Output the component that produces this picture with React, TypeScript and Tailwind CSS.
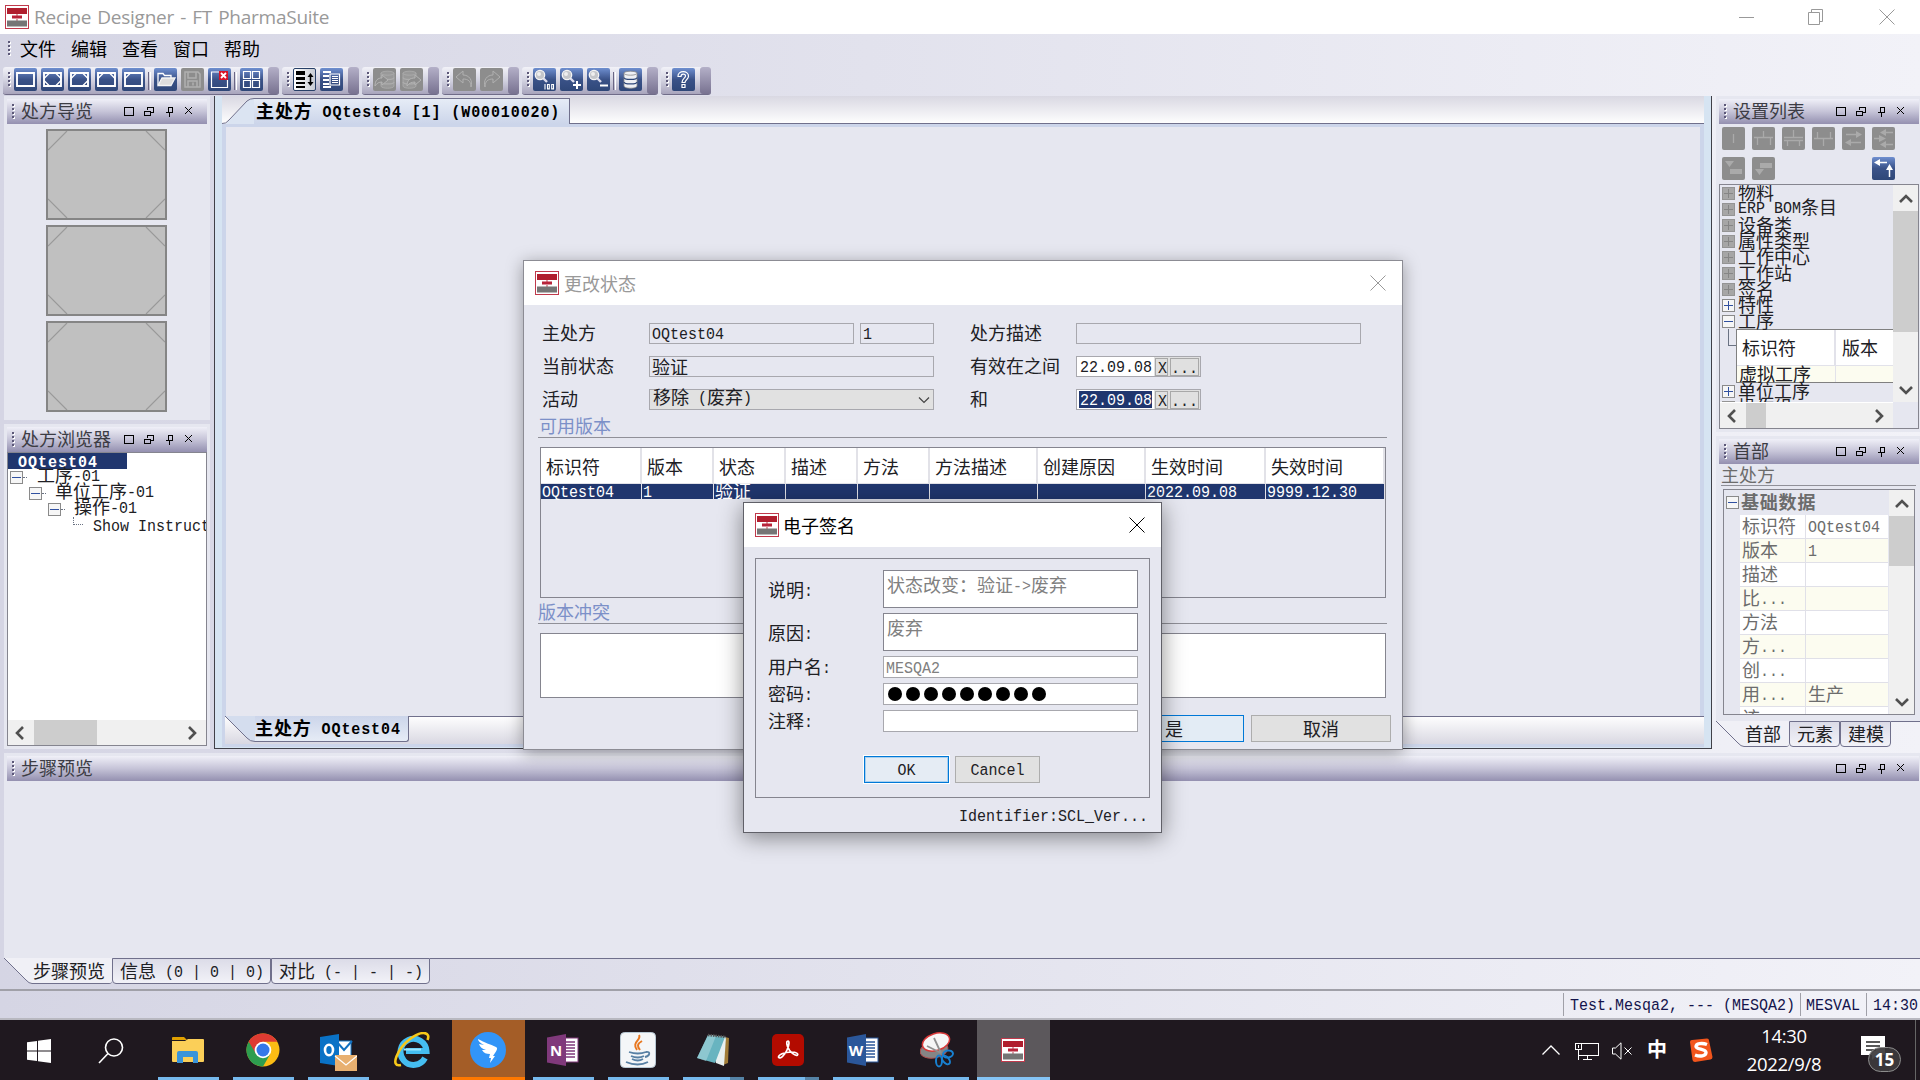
import React from "react";

/* Mixed-width text: half-width runs are 9px per character, full-width runs 18px. */
function T({ children, className = "", latin = "" }: { children: string; className?: string; latin?: string }) {
  const parts = children.split(/([\x20-\x7e]+)/).filter(Boolean);
  return (
    <span className={"whitespace-pre " + className}>
      {parts.map((p, i) =>
        /^[\x20-\x7e]/.test(p) ? (
          <span key={i} className={"inline-block -translate-y-[2px] scale-y-[1.14] font-['Liberation_Mono',monospace] text-[15px] " + latin}>{p}</span>
        ) : (
          <span key={i} className="inline-block -translate-y-px">{p}</span>
        )
      )}
    </span>
  );
}

function AppIcon({ className = "h-6 w-6" }: { className?: string }) {
  return (
    <svg viewBox="0 0 24 24" className={className + " shrink-0"}>
      <rect x="0.5" y="0.5" width="23" height="23" fill="#fff" stroke="#c03a4c" />
      <rect x="2" y="3" width="20" height="6" fill="#b01e2e" />
      <path d="M11.500 9h1v2h-1zM11.500 14h1v2h-1z" fill="#c04050" />
      <rect x="7" y="10.500" width="10" height="3" fill="#b8243a" />
      <rect x="2" y="15.5" width="20" height="6" fill="#757575" />
    </svg>
  );
}

function Grip({ className = "" }: { className?: string }) {
  return (
    <svg viewBox="0 0 3 18" className={"h-[18px] w-[3px] shrink-0 " + className} shapeRendering="crispEdges">
      {[0, 4, 8, 12].map((y) => (
        <g key={y}>
          <rect x="1" y={y + 2} width="2" height="2" fill="#fff" />
          <rect x="0" y={y + 1} width="2" height="2" fill="#5c5878" />
        </g>
      ))}
    </svg>
  );
}

function PanelHeader({ title }: { title: string }) {
  return (
    <div className="flex h-[25px] shrink-0 items-center bg-linear-to-b from-[#f0f0f8] via-[#c6c4d8] to-[#9490b0] pl-[5px] pr-[13px]">
      <Grip />
      <T className="ml-[6px] flex-1 leading-[25px] text-[#3c3c44]">{title}</T>
      <svg viewBox="0 0 70 12" className="h-3 w-[70px] shrink-0 -translate-y-px" fill="none" stroke="#000" shapeRendering="crispEdges">
        <rect x="0.5" y="2.5" width="9" height="8" />
        <path d="M20.500 6.500h6v4h-6zM23.500 5V2.500h6v5H27" />
        <path d="M44.500 2v5M48.500 2v5M44 2.500h5M42 7.500h7M45.500 8v4" />
        <path d="M61 2l7 7M68 2l-7 7" shapeRendering="auto" />
      </svg>
    </div>
  );
}

/* ---------- toolbar ---------- */

function ToolButton({ kind = "blue", children }: { kind?: "blue" | "gray" | "light"; children?: React.ReactNode }) {
  const tone =
    kind === "blue"
      ? "bg-linear-to-b from-[#6f8fd0] via-[#3a5288] to-[#2f4778]"
      : kind === "gray"
      ? "bg-[#8d8d8d]"
      : "border border-[#284068] bg-linear-to-r from-white to-[#c8ccd4]";
  return (
    <div className={"h-[23px] w-[23px] shrink-0 overflow-hidden rounded-[2px] " + tone}>
      <svg viewBox="0 0 23 23" className={kind === "light" ? "-m-px h-[23px] w-[23px]" : "h-[23px] w-[23px]"} fill="none" stroke={kind === "gray" ? "#aaa" : "#fff"} strokeWidth="1.3">
        {children}
      </svg>
    </div>
  );
}

function ToolGroup({ children }: { children: React.ReactNode }) {
  return (
    <div className="flex h-7 overflow-hidden rounded-[3px] border-b border-[#706c88] bg-linear-to-b from-[#f2f2f8] via-[#d2d2e0] to-[#a8a4bc]">
      <div className="flex items-start pt-px">
        <Grip className="mx-[5px] mt-[3px] mr-[3px]" />
        <div className="flex gap-1">{children}</div>
      </div>
      <div className="ml-[5px] w-[11px] rounded-l-[3px] bg-linear-to-b from-[#b4b0c8] to-[#787290]" />
    </div>
  );
}

function Sep() {
  return <div className="-mx-px mt-1 h-[18px] w-[3px] border-l border-[#6a6684] border-r border-r-white" />;
}

function Cylinder({ x = 5, y = 3, stroke = "#888", fill = "#eef0f4" }: { x?: number; y?: number; stroke?: string; fill?: string }) {
  return (
    <g transform={`translate(${x} ${y})`} stroke={stroke} strokeWidth="0.8" fill={fill}>
      <path d="M0 2v13c0 3 13 3 13 0V2z" />
      <ellipse cx="6.500" cy="2.200" rx="6.500" ry="2" />
      <path d="M0 6.500c0 2.600 13 2.600 13 0M0 11c0 2.600 13 2.600 13 0" stroke={stroke === "#888" ? "#2f4778" : stroke} strokeWidth="1.200" fill="none" />
    </g>
  );
}

function Magnifier() {
  return (
    <g>
      <path d="M10.500 10.500l3.500 3.500" stroke="#dde" strokeWidth="2.400" />
      <circle cx="7" cy="7" r="4.700" fill="#c4c6ca" stroke="#f4f4f4" strokeWidth="1.300" />
      <circle cx="6" cy="6" r="2" fill="#eee" stroke="none" />
    </g>
  );
}

function Frame() {
  return <path d="M3 5h17v13H3z" strokeWidth="1.900" />;
}

function Toolbar() {
  return (
    <div className="flex h-[29px] items-start gap-[3px]">
      <ToolGroup>
        <ToolButton><Frame /></ToolButton>
        <ToolButton><Frame /><path d="M3 10.500l5.500-5.500M14.500 5l5.500 5.500M3 12.500l5.500 5.500M14.500 18l5.500-5.500" /></ToolButton>
        <ToolButton><Frame /><path d="M3 10.500l5.500-5.500M14.500 5l5.500 5.500M14.500 18l5.500-5.500" /></ToolButton>
        <ToolButton><Frame /><path d="M3 10.500l5.500-5.500M14.500 5l5.500 5.500" /></ToolButton>
        <ToolButton><Frame /><path d="M3 10.500l5.500-5.500" /></ToolButton>
        <Sep />
        <ToolButton>
          <path d="M4 17V5.500h5l1.500 2H17V10" />
          <path d="M4 17.500l4-7.500h13l-4 7.500z" fill="#ddd" stroke="#f4f4f4" />
        </ToolButton>
        <ToolButton kind="gray">
          <path d="M4 4h13l2 2v13H4zM7 4v6h8V4M7 19v-6h9v6M12 14.500v3" stroke="#b0b0b0" strokeWidth="1.500" />
        </ToolButton>
        <ToolButton>
          <path d="M12 4H3.500v15.500h16V12" strokeWidth="1.200" />
          <rect x="11" y="3" width="9" height="9" fill="#d81428" stroke="none" />
          <path d="M13 5l5 5M18 5l-5 5" strokeWidth="1.800" />
        </ToolButton>
        <Sep />
        <ToolButton>
          <path d="M3.500 3.500h7v7h-7zM12.500 3.500h7v7h-7zM3.500 12.500h7v7h-7zM12.500 12.500h7v7h-7z" strokeWidth="1.200" />
        </ToolButton>
      </ToolGroup>
      <ToolGroup>
        <ToolButton kind="light">
          <path d="M3 3h9v4H3zM3 9h9v3H3zM3 14h9v2H3zM3 18h9v2H3z" fill="#000" stroke="none" />
          <path d="M17.500 8v7" stroke="#000" strokeWidth="1.500" />
          <path d="M14.500 9l3-4 3 4zM14.500 14l3 4 3-4z" fill="#000" stroke="none" />
        </ToolButton>
        <ToolButton>
          <path d="M3 4h8M3 8h6M3 12h6M3 16h6M3 19h8" strokeWidth="2" />
          <path d="M10 6h9.500v11H10z" strokeWidth="1.200" />
          <path d="M12 8.500h6M12 10.500h6M12 12.500h6M12 14.500h6" strokeWidth="1" />
        </ToolButton>
      </ToolGroup>
      <ToolGroup>
        <ToolButton kind="gray">
          <Cylinder x={8} y={3} stroke="#adadad" fill="#999" />
          <path d="M2 18c0-6 3-8 7-8V7l6 5-6 5v-3c-3 0-5 1-7 4z" fill="#8d8d8d" stroke="#b4b4b4" strokeWidth="1" />
        </ToolButton>
        <ToolButton kind="gray">
          <Cylinder x={3} y={3} stroke="#adadad" fill="#999" />
          <path d="M7 18c0-6 3-8 8-8V7l6 5-6 5v-3c-3 0-6 1-8 4z" fill="#8d8d8d" stroke="#b4b4b4" strokeWidth="1" />
        </ToolButton>
      </ToolGroup>
      <ToolGroup>
        <ToolButton kind="gray"><path d="M18 19c0-6-3-8-8-8v4L3 9l7-6v4c6 0 10 5 8 12z" stroke="#b0b0b0" strokeWidth="1" /></ToolButton>
        <ToolButton kind="gray"><path d="M5 19c0-6 3-8 8-8v4l7-6-7-6v4C7 7 3 12 5 19z" stroke="#b0b0b0" strokeWidth="1" /></ToolButton>
      </ToolGroup>
      <ToolGroup>
        <ToolButton>
          <Magnifier />
          <path d="M12 16v5.500M14.500 16.500h1.800v4.400h-1.800zM18.700 16.500h1.800v4.400h-1.800z" strokeWidth="1.100" />
        </ToolButton>
        <ToolButton><Magnifier /><path d="M17 13v8M13 17h8" strokeWidth="2" /></ToolButton>
        <ToolButton><Magnifier /><path d="M13 17.500h8" strokeWidth="2" /></ToolButton>
        <Sep />
        <ToolButton><Cylinder /></ToolButton>
      </ToolGroup>
      <ToolGroup>
        <ToolButton>
          <path d="M6 8.500C5.500 2 17 2 16.500 8.500c-.3 3-3.500 3.500-3.500 6h-3c0-4 3.500-4.500 3.500-6.500 0-2.500-4.500-2.500-4.500 .500zM10 16.500h3v3h-3z" strokeWidth="1.200" />
        </ToolButton>
      </ToolGroup>
    </div>
  );
}

/* ---------- scroll bars ---------- */

const chevrons = {
  left: "M15 6l-6 6 6 6",
  right: "M9 6l6 6-6 6",
  up: "M6 15l6-6 6 6",
  down: "M6 9l6 6 6-6",
};
function Arrow({ dir }: { dir: keyof typeof chevrons }) {
  return (
    <svg viewBox="0 0 24 24" className="h-6 w-6 shrink-0" fill="none" stroke="#505050" strokeWidth="2.6">
      <path d={chevrons[dir]} />
    </svg>
  );
}

function Expander({ open = false, off = false }: { open?: boolean; off?: boolean }) {
  return (
    <svg viewBox="0 0 13 13" className="h-[13px] w-[13px] shrink-0" shapeRendering="crispEdges" fill="none">
      <rect x="0.5" y="0.5" width="12" height="12" fill={off ? "#a6a6a6" : "#f6f6f6"} stroke={off ? "#949494" : "#8a8a8a"} />
      <path d={open ? "M2 6.500h9" : "M2 6.500h9M6.500 2v9"} stroke={off ? "#868686" : "#3050a0"} />
    </svg>
  );
}

/* ---------- left column ---------- */

function Thumb() {
  return (
    <div className="h-[91px] w-[121px] border-2 border-[#858585] bg-[#c0c0c0]">
      <svg viewBox="0 0 117 87" className="h-full w-full" stroke="#999" strokeWidth="1.2">
        <path d="M0 19L19 0M98 0l19 19M0 68l19 19M98 87l19-19" />
      </svg>
    </div>
  );
}

function LeftColumn() {
  return (
    <div className="ml-1 flex w-[206px] shrink-0 flex-col gap-1">
      <div className="flex h-[324px] flex-col bg-[#e6e7f0] px-[3px] pt-[3px]">
        <PanelHeader title="处方导览" />
        <div className="mt-[5px] ml-[39px] flex flex-col gap-[5px]">
          <Thumb />
          <Thumb />
          <Thumb />
        </div>
      </div>
      <div className="flex h-[325px] flex-col bg-[#e6e7f0] px-[3px] pt-[3px] pb-[3px]">
        <PanelHeader title="处方浏览器" />
        <div className="flex flex-1 flex-col overflow-hidden border border-[#85858f] bg-white">
          <div className="flex h-4 w-[119px] shrink-0 items-center bg-[#20366e] pl-[10px] font-bold leading-4 tracking-[1px] text-white">
            <T latin="translate-y-0">OQtest04</T>
          </div>
          <div className="flex h-4 items-center pl-[2px]"><Expander open /><i className="w-[4px] border-t border-dotted border-gray-500" /><T className="ml-[10px] leading-4">工序-01</T></div>
          <div className="flex h-4 items-center pl-[21px]"><Expander open /><i className="w-[4px] border-t border-dotted border-gray-500" /><T className="ml-[9px] leading-4">单位工序-01</T></div>
          <div className="flex h-4 items-center pl-[40px]"><Expander open /><i className="w-[4px] border-t border-dotted border-gray-500" /><T className="ml-[9px] leading-4">操作-01</T></div>
          <div className="flex h-4 items-start pl-[65px]"><i className="h-[8px] w-[10px] shrink-0 border-b border-l border-dotted border-gray-500" /><T className="ml-[10px] leading-4">Show Instruct</T></div>
          <div className="mt-auto flex h-[25px] items-center bg-[#f0f0f0]">
            <Arrow dir="left" />
            <div className="ml-[2px] h-full w-[63px] bg-[#cdcdcd]" />
            <div className="ml-auto pr-[2px]"><Arrow dir="right" /></div>
          </div>
        </div>
      </div>
    </div>
  );
}

/* ---------- centre ---------- */

function Centre() {
  return (
    <div className="ml-1 flex h-[653px] w-[1498px] shrink-0 border border-t-0 border-[#404048] bg-[#d6e4f2] px-[7px] pb-px">
      <div className="flex flex-1 flex-col bg-[#ccd5ea] pb-[3px]">
        <div className="flex h-7 flex-none bg-linear-to-b from-[#d9d8e2] to-white">
          <svg viewBox="0 0 32 28" className="h-7 w-8 shrink-0">
            <path d="M0 27.500H4L25 5Q28 2.500 32 2.500V28H0z" fill="#dbe4f2" />
            <path d="M0 27.500Q4 28 7 24L25 5Q28 2.500 32 2.500" fill="none" stroke="#70708c" />
          </svg>
          <div className="mt-[2px] h-[26px] w-[316px] shrink-0 border-t border-r border-[#70708c] bg-linear-to-b from-[#e6ecf6] to-[#ccd5ea] pl-[2px] font-bold leading-6 tracking-[0.9px] text-black">
            <T>主处方 OQtest04 [1] (W00010020)</T>
          </div>
          <div className="flex-1 border-b border-[#70708c]" />
        </div>
        <div className="mx-1 mt-[3px] flex-1 bg-[#e6e7f0]" />
        <div className="ml-[3px] flex h-[28px] shrink-0 bg-linear-to-b from-white to-[#d9d8e2]">
          <svg viewBox="0 0 30 26" className="h-[26px] w-[30px] shrink-0">
            <path d="M0 0L22 22Q25 25.500 30 25.500V0z" fill="#d4ddee" />
            <path d="M0 0L22 22Q25 25.500 30 25.500" fill="none" stroke="#70708c" />
          </svg>
          <div className="h-[26px] w-[154px] shrink-0 rounded-br-[3px] border-r border-b border-[#70708c] bg-linear-to-b from-[#ccd5ea] to-[#e6ecf6] font-bold leading-[25px] tracking-[0.9px] text-black">
            <T>主处方 OQtest04</T>
          </div>
          <div className="flex-1 border-t border-[#70708c]" />
        </div>
      </div>
    </div>
  );
}

/* ---------- right column ---------- */

function SettingsPanel() {
  const names = ["物料", "ERP BOM条目", "设备类", "属性类型", "工作中心", "工作站", "签名"];
  return (
    <div className="flex h-[336px] flex-col bg-[#e6e7f0] pt-[3px] pr-px pl-[3px]">
      <PanelHeader title="设置列表" />
      <div className="mt-[3px] grid grid-cols-[repeat(6,23px)] gap-[7px] pl-[3px]">
        <ToolButton kind="gray"><path d="M11.500 7v9" /></ToolButton>
        <ToolButton kind="gray"><path d="M11.500 4v6M2 10.500h19M5.500 10v8M18.500 10v8" /></ToolButton>
        <ToolButton kind="gray"><path d="M11.500 3v7M2 10.500h19M2 13.500h19M5.500 14v5M17.500 14v5" /></ToolButton>
        <ToolButton kind="gray"><path d="M5.500 5v6M18.500 5v6M2 11.500h19M11.500 12v7" /></ToolButton>
        <ToolButton kind="gray"><path d="M4 7.500h12M7 15.500h12" /><path d="M14 4l6 3.500-6 3.500zM9 12l-6 3.500L9 19z" fill="#aaa" stroke="none" /></ToolButton>
        <ToolButton kind="gray"><path d="M13 5.500h8M2 11.500h6M13 17.500h8" /><path d="M14 2L8 5.500 14 9zM7 8l7 3.500L7 15zM14 14l-6 3.500 6 3.500z" fill="#aaa" stroke="none" /></ToolButton>
        <ToolButton kind="gray"><path d="M3 4h9l-4.500 6zM8 12h12v5H8z" fill="#aaa" stroke="none" /></ToolButton>
        <ToolButton kind="gray"><path d="M8 6h12v5H8zM3 12h9l-4.500 6z" fill="#aaa" stroke="none" /></ToolButton>
        <i /><i /><i />
        <ToolButton><path d="M7 5.500h8M17.500 12v8" strokeWidth="1.500" /><path d="M8 2L2 5.500 8 9zM14 13l3.500-6 3.500 6z" fill="#fff" stroke="none" /></ToolButton>
      </div>
      <div className="mt-1 flex h-[245px] flex-col border border-[#85858f]">
        <div className="flex h-[217px]">
          <div className="flex h-[217px] w-[173px] flex-col overflow-hidden leading-4">
            {names.map((n) => (
              <div key={n} className="flex h-4 shrink-0 items-center pl-[2px]"><Expander off /><T className="ml-[3px]">{n}</T></div>
            ))}
            <div className="flex h-4 shrink-0 items-center pl-[2px]"><Expander /><T className="ml-[3px]">特性</T></div>
            <div className="flex h-4 shrink-0 items-center pl-[2px]"><Expander open /><T className="ml-[3px]">工序</T></div>
            <div className="flex h-[54px] shrink-0">
              <div className="ml-2 h-[17px] w-2 shrink-0 border-b border-l border-gray-500" />
              <div className="flex-1 border border-r-0 border-[#808080] bg-white">
                <div className="flex h-9 border-b border-[#e2e2ea] leading-[37px]">
                  <T className="w-[99px] border-r-2 border-[#e2e2ea] pl-[5px]">标识符</T>
                  <T className="pl-[6px]">版本</T>
                </div>
                <div className="flex h-4 bg-[#fcfcf0] leading-4">
                  <T className="w-[99px] border-r border-[#e2e2ea] pl-[2px]">虚拟工序</T>
                </div>
              </div>
            </div>
            <div className="flex h-4 shrink-0 items-center pl-[2px]"><Expander /><T className="ml-[3px]">单位工序</T></div>
            <div className="flex h-4 shrink-0 items-center pl-[2px]"><Expander off /><T className="ml-[3px]">操作组</T></div>
          </div>
          <div className="flex flex-1 flex-col items-center bg-[#f0f0f0]">
            <div className="h-[26px] pt-[2px]"><Arrow dir="up" /></div>
            <div className="mr-px h-[121px] w-full bg-[#cdcdcd]" />
            <div className="mt-auto"><Arrow dir="down" /></div>
          </div>
        </div>
        <div className="flex h-[26px] w-[173px] items-center border-t border-white bg-[#f0f0f0]">
          <Arrow dir="left" />
          <div className="ml-[2px] h-full w-5 bg-[#cdcdcd]" />
          <div className="ml-auto pr-[2px]"><Arrow dir="right" /></div>
        </div>
      </div>
    </div>
  );
}

function HeaderPanel() {
  const rows: [string, string][] = [
    ["标识符", "OQtest04"],
    ["版本", "1"],
    ["描述", ""],
    ["比...", ""],
    ["方法", ""],
    ["方...", ""],
    ["创...", ""],
    ["用...", "生产"],
    ["该...", ""],
  ];
  return (
    <div className="flex h-[285px] flex-col bg-[#e6e7f0] pt-[3px] pr-px pl-[3px] text-[#6c6c6c]">
      <PanelHeader title="首部" />
      <div className="mr-[3px] ml-[2px] h-[22px] border-b border-[#909098] leading-[22px]"><T>主处方</T></div>
      <div className="mt-[3px] mr-1 ml-1 flex h-[226px] overflow-hidden border border-[#85858f]">
        <div className="w-[165px] shrink-0 overflow-hidden">
          <div className="flex h-[25px] items-center pl-[2px] font-bold"><Expander open /><T className="ml-[2px] leading-[25px] tracking-[0.8px]">基础数据</T></div>
          {rows.map(([a, b], i) => (
            <div key={i} className={"ml-4 flex h-6 w-[148px] border-b border-[#e0e0e8] leading-[22px] " + (i % 2 ? "bg-[#fcfcf0]" : "bg-white")}>
              <T className="w-[66px] shrink-0 border-r border-[#e0e0e8] pl-[2px]">{a}</T>
              <T className="pl-[2px]">{b}</T>
            </div>
          ))}
        </div>
        <div className="flex flex-1 flex-col items-center bg-[#f0f0f0]">
          <div className="h-[26px] pt-[2px]"><Arrow dir="up" /></div>
          <div className="h-[50px] w-full bg-[#cdcdcd]" />
          <div className="mt-auto"><Arrow dir="down" /></div>
        </div>
      </div>
    </div>
  );
}

function TabStrip({ first, firstW, rest }: { first: string; firstW: string; rest: [string, string][] }) {
  return (
    <div className="flex h-[26px] shrink-0">
      <svg viewBox="0 0 28 26" className="h-[26px] w-7 shrink-0">
        <path d="M0 0L22 22Q25 25.500 28 25.500V0z" fill="#f0f0f6" />
        <path d="M0 0L22 22Q25 25.500 28 25.500" fill="none" stroke="#70708c" />
      </svg>
      <div className={"shrink-0 rounded-br-[3px] border-b border-[#70708c] bg-[#f0f0f6] pl-px leading-[26px] " + firstW}><T>{first}</T></div>
      {rest.map(([label, w]) => (
        <div key={label} className={"shrink-0 rounded-b-[4px] border border-[#70708c] bg-linear-to-b from-[#dcdce8] to-[#f2f2f8] pl-[7px] leading-6 " + w}><T>{label}</T></div>
      ))}
      <div className="flex-1 border-t border-[#70708c]" />
    </div>
  );
}

function RightColumn() {
  return (
    <div className="ml-1 flex flex-1 flex-col overflow-hidden">
      <SettingsPanel />
      <div className="h-1 shrink-0" />
      <HeaderPanel />
      <TabStrip first="首部" firstW="w-[45px]" rest={[["元素", "w-[51px]"], ["建模", "w-[51px]"]]} />
    </div>
  );
}

/* ---------- change status dialog ---------- */

const box = "border border-[#a8a8ae]";

function DateField({ selected = false }: { selected?: boolean }) {
  return (
    <div className={"flex h-[21px] w-[125px] items-center bg-[#e0e0e0] leading-[17px] " + box}>
      <div className="h-full w-[77px] bg-white p-px pl-[2px]">
        <T className={"block h-[17px] w-[73px] pl-px " + (selected ? "bg-[#20366e] text-white" : "")}>22.09.08</T>
      </div>
      <div className="ml-px h-[18px] w-[13px] border border-[#a8a8a8] pl-[2px]"><T>X</T></div>
      <div className="ml-[2px] h-[18px] w-[29px] border border-[#a8a8a8]"><T>...</T></div>
    </div>
  );
}

function StatusDialog() {
  const cols: [string, string, string][] = [
    ["标识符", "OQtest04", "w-[101px]"],
    ["版本", "1", "w-[72px]"],
    ["状态", "验证", "w-[72px]"],
    ["描述", "", "w-[72px]"],
    ["方法", "", "w-[72px]"],
    ["方法描述", "", "w-[108px]"],
    ["创建原因", "", "w-[108px]"],
    ["生效时间", "2022.09.08", "w-[120px]"],
    ["失效时间", "9999.12.30", "w-[119px]"],
  ];
  return (
    <div className="absolute top-[260px] left-[523px] flex h-[490px] w-[880px] flex-col border border-[#8c8c94] bg-[#e6e7f0] shadow-[0_3px_16px_rgba(0,0,0,0.35)]">
      <div className="flex h-11 shrink-0 items-center bg-white pb-px pl-[11px] text-[#999]">
        <AppIcon />
        <span className="ml-[5px] flex-1">更改状态</span>
        <svg viewBox="0 0 16 16" className="mr-4 h-4 w-4" stroke="#999"><path d="M.5.500l15 15M15.500.500l-15 15" /></svg>
      </div>
      <div className="mt-[18px] ml-[18px] grid grid-cols-[107px_321px_106px_285px] grid-rows-[21px_21px_21px] gap-y-3 leading-[21px]">
        <T>主处方</T>
        <div className="flex gap-[6px]">
          <div className={"h-[21px] w-[205px] pl-[2px] leading-[19px] " + box}><T>OQtest04</T></div>
          <div className={"h-[21px] w-[74px] pl-[2px] leading-[19px] " + box}><T>1</T></div>
        </div>
        <T>处方描述</T>
        <div className={"h-[21px] " + box} />
        <T>当前状态</T>
        <div className={"h-[21px] w-[285px] pl-[2px] leading-5 " + box}><T>验证</T></div>
        <T>有效在之间</T>
        <DateField />
        <T>活动</T>
        <div className={"flex h-[21px] w-[285px] items-center justify-between bg-[#e1e1e1] pr-[3px] pl-[3px] leading-5 " + box}>
          <T>移除 (废弃)</T>
          <svg viewBox="0 0 12 8" className="h-2 w-3" fill="none" stroke="#444" strokeWidth="1.2"><path d="M1 1.500l5 5 5-5" /></svg>
        </div>
        <T>和</T>
        <DateField selected />
      </div>
      <div className="mt-[5px] mr-[15px] ml-[14px] h-[23px] border-b border-[#909098] pl-px leading-[22px] text-[#7c90c8]"><T>可用版本</T></div>
      <div className="mt-[9px] ml-4 h-[151px] w-[846px] border border-[#85858f]">
        <div className="flex h-[36px] bg-white leading-[38px]">
          {cols.map(([h, , w]) => (
            <div key={h} className={"h-9 shrink-0 border-r-2 border-b border-[#e2e2e8] pl-[5px] " + w}><T>{h}</T></div>
          ))}
        </div>
        <div className="flex h-[15px] w-[844px] bg-[#20366e] leading-[15px] text-white">
          {cols.map(([h, v, w]) => (
            <div key={h} className={"h-[15px] shrink-0 border-r border-[#e2e2e8] pl-px " + w}><T>{v}</T></div>
          ))}
        </div>
      </div>
      <div className="mt-[3px] mr-[15px] ml-[14px] h-[23px] border-b border-[#909098] leading-[22px] text-[#7c90c8]"><T>版本冲突</T></div>
      <div className="mt-[9px] ml-4 h-[65px] w-[846px] border border-[#85858f] bg-white" />
      <div className="mt-[17px] mr-[11px] flex justify-end gap-[7px] text-center leading-[26px]">
        <div className="h-[27px] w-[140px] border border-[#0078d7] bg-[#e3ecf5]"><T>是</T></div>
        <div className="h-[27px] w-[140px] border border-[#adadad] bg-[#e1e1e1]"><T>取消</T></div>
      </div>
    </div>
  );
}

/* ---------- signature dialog ---------- */

function SignatureDialog() {
  return (
    <div className="absolute top-[502px] left-[743px] flex h-[331px] w-[419px] flex-col border border-[#606068] bg-[#e6e7f0] shadow-[0_4px_22px_rgba(0,0,0,0.45)]">
      <div className="flex h-11 shrink-0 items-center bg-white pb-px pl-[11px] text-black">
        <AppIcon />
        <span className="ml-1 flex-1">电子签名</span>
        <svg viewBox="0 0 16 16" className="mr-4 h-4 w-4" stroke="#000"><path d="M.5.500l15 15M15.500.500l-15 15" /></svg>
      </div>
      <div className="mt-[11px] ml-[11px] h-[242px] w-[395px] border border-[#85858f] pt-[11px] pl-[12px]">
        <div className="grid grid-cols-[115px_255px] grid-rows-[38px_38px_22px_22px_22px] gap-y-[5px] leading-[22px]">
          <T className="leading-[40px]">说明:</T>
          <div className="border border-[#85858f] bg-white pl-[3px] leading-[28px] text-[#808080]"><T>状态改变：验证-&gt;废弃</T></div>
          <T className="leading-[40px]">原因:</T>
          <div className="border border-[#85858f] bg-white pl-[3px] leading-[28px] text-[#808080]"><T>废弃</T></div>
          <T>用户名:</T>
          <div className="border border-[#a8a8ae] bg-white pl-[2px] leading-[21px] text-[#808080]"><T>MESQA2</T></div>
          <T>密码:</T>
          <div className="flex items-center gap-1 border border-[#a8a8ae] bg-white pl-1">
            {Array.from({ length: 9 }, (_, i) => <i key={i} className="h-[14px] w-[14px] rounded-full bg-black" />)}
          </div>
          <T>注释:</T>
          <div className="border border-[#a8a8ae] bg-white" />
        </div>
        <div className="mt-6 ml-24 flex gap-[6px] text-center leading-[25px]">
          <div className="h-[27px] w-[85px] border border-[#0078d7] bg-[#e5ecf4] shadow-[inset_0_0_0_1px_#a8d0f0,0_0_0_1px_#fff]"><T>OK</T></div>
          <div className="h-[27px] w-[85px] border border-[#adadad] bg-[#e1e1e1]"><T>Cancel</T></div>
        </div>
      </div>
      <div className="mt-[5px] pr-[13px] text-right leading-6"><T>Identifier:SCL_Ver...</T></div>
    </div>
  );
}

/* ---------- task bar ---------- */

function Slot({ children, line = "run", className = "" }: { children: React.ReactNode; line?: "run" | "two" | "none" | "full"; className?: string }) {
  return (
    <div className={"flex h-[60px] w-[73px] shrink-0 flex-col items-center " + className}>
      <div className="flex h-[57px] items-center pt-[3px] pr-px">{children}</div>
      {line === "run" && <div className="h-[3px] w-[61px] bg-[#76b9ed]" />}
      {line === "full" && <div className="h-[3px] w-full bg-[#85c4f5]" />}
      {line === "two" && <div className="flex h-[3px] w-[61px]"><i className="flex-1 bg-[#76b9ed]" /><i className="w-[14px] bg-[#5583a6]" /></div>}
    </div>
  );
}

function OfficeIcon({ letter, color }: { letter: string; color: string }) {
  return (
    <svg viewBox="0 0 32 32" className="h-8 w-8">
      <rect x="17" y="4" width="14" height="24" fill="#fff" stroke={color} />
      <path d="M19 8h9M19 11h9M19 14h9M19 17h9M19 20h9M19 23h9" stroke={color} strokeWidth="1.400" />
      <path d="M0 3.500L19 0v32L0 28.500z" fill={color} />
      <text x="9" y="22" textAnchor="middle" fill="#fff" fontFamily="Open Sans, sans-serif" fontWeight="700" fontSize="15">{letter}</text>
    </svg>
  );
}

function Taskbar() {
  return (
    <div className="flex h-[60px] shrink-0 bg-[#1f181f] text-white">
      <div className="flex w-[77px] items-center justify-center pt-[2px]">
        <svg viewBox="0 0 24 24" className="h-6 w-6" fill="#fff"><path d="M0 3.300L10 2v9.500H0zM11 1.800L24 0v11.500H11zM0 12.500h10V22L0 20.700zM11 12.500h13V24l-13-1.800z" /></svg>
      </div>
      <div className="flex w-[67px] items-center justify-center pt-[2px]">
        <svg viewBox="0 0 26 26" className="h-[26px] w-[26px]" fill="none" stroke="#fff" strokeWidth="1.600"><circle cx="16" cy="9.500" r="8.500" /><path d="M10 15.500L1 25" /></svg>
      </div>
      <div className="ml-2 flex gap-[2px]">
        <Slot>
          <svg viewBox="0 0 32 28" className="h-7 w-8">
            <path d="M0 2q0-1 1-1h11l3 3H0z" fill="#e0a000" />
            <path d="M0 5h13l3-2h15q1 0 1 1v21q0 1-1 1H1q-1 0-1-1z" fill="#fbcf58" />
            <path d="M5 27V17q0-2 2-2h17q2 0 2 2v10h-5v-6H11v6z" fill="#3a94da" />
          </svg>
        </Slot>
        <Slot>
          <svg viewBox="0 0 34 34" className="h-[34px] w-[34px]">
            <circle cx="17" cy="17" r="16.500" fill="#fbbc14" />
            <path d="M2.700 8.700A16.500 16.500 0 0 0 17 33.500l7-12L17 17z" fill="#2d9d4f" />
            <path d="M2.700 8.700A16.500 16.500 0 0 1 31.300 8.700H17l-7 12z" fill="#dd3b32" />
            <circle cx="17" cy="17" r="8.300" fill="#fff" />
            <circle cx="17" cy="17" r="6.500" fill="#3478e8" />
          </svg>
        </Slot>
        <Slot>
          <svg viewBox="0 0 38 38" className="mt-1 h-[38px] w-[38px]">
            <rect x="17" y="8" width="15" height="16" fill="#fff" stroke="#1b7ccc" />
            <path d="M17 8l8 9 8-9" fill="none" stroke="#1070c0" strokeWidth="2" />
            <path d="M1 4l19-3v32L1 30z" fill="#0a72c6" />
            <ellipse cx="10" cy="17" rx="4" ry="5.200" fill="none" stroke="#fff" strokeWidth="2.600" />
            <rect x="16" y="22" width="22" height="16" fill="#e8b070" />
            <path d="M16 23l11 9 11-9" fill="none" stroke="#fff" strokeWidth="1.200" />
          </svg>
        </Slot>
        <Slot line="none">
          <svg viewBox="0 0 36 36" className="mr-[3px] h-9 w-9" fill="none">
            <path d="M31 26A13 13 0 1 1 32.500 19H12" stroke="#45bdf0" strokeWidth="6" />
            <path d="M10 17.500h17" stroke="#9be6ff" strokeWidth="2" />
            <path d="M7 33C-5 36 4 16 16 7S37 0 33.500 8" stroke="#f8c818" strokeWidth="2.600" />
          </svg>
        </Slot>
        <div className="flex h-[60px] w-[73px] flex-col items-center bg-[#a45d27]">
          <div className="flex h-[57px] items-center pt-[3px] pr-px">
            <svg viewBox="0 0 36 36" className="h-9 w-9">
              <circle cx="18" cy="18" r="18" fill="#3295f8" />
              <path d="M8 7c7 4 12 5 18 8 2 1 1 3-1 6l-2 3h2l-5 7 1-5h-2l1-4c-4 0-6-1-8-4l4 0c-4-1-6-3-7-6l5 1C10 11 8 9 8 7z" fill="#fff" />
            </svg>
          </div>
          <div className="h-[3px] w-full bg-[#ff7800]" />
        </div>
        <Slot><OfficeIcon letter="N" color="#80397b" /></Slot>
        <Slot>
          <svg viewBox="0 0 36 36" className="h-9 w-9" fill="none">
            <rect x=".5" y=".5" width="35" height="35" rx="4" fill="#f4f6f8" stroke="#b8c8d4" />
            <path d="M19 3c3 5-8 7-2 15M22 9c-5 3-5 5-2 9" stroke="#e87820" strokeWidth="2" />
            <path d="M9 20q9 3 17 0M11 24q7 3 13 0M12 27q6 3 11 0M6 30q12 5 22 0M26 20c5-1 4 4-1 5" stroke="#5880a4" strokeWidth="1.800" />
          </svg>
        </Slot>
        <Slot line="two">
          <svg viewBox="0 0 34 34" className="h-[34px] w-[34px]">
            <path d="M29 4l4 1-1 25-5 2z" fill="#a07c38" />
            <path d="M13 2l17 2-2 29-8-3z" fill="#e8f0f0" />
            <path d="M12 2l17 2-10 26L1 25z" fill="#68b4c0" />
            <path d="M12 2l8 1-10 25-9-3z" fill="#a6d4da" opacity=".6" />
            <path d="M12 2l18 2" stroke="#555" strokeWidth="2.500" strokeDasharray="1.500 1" />
          </svg>
        </Slot>
        <Slot line="two">
          <svg viewBox="0 0 34 34" className="h-[34px] w-[34px]" fill="none">
            <rect x="1" y="1" width="32" height="32" rx="5" fill="#b30b00" />
            <path d="M7.500 24c0-2 5-5 13-5 5 0 7 2 6 3-2 1.500-8-3-10-8.500C15 9 16 8 17 8c1.500 0 1.300 4-1 9-2.500 5.500-7 10-8.500 7z" stroke="#fff" strokeWidth="1.700" />
          </svg>
        </Slot>
        <Slot><OfficeIcon letter="W" color="#2b579a" /></Slot>
        <Slot>
          <svg viewBox="0 0 34 36" className="mr-[2px] h-9 w-[34px]" fill="none">
            <ellipse cx="14" cy="18" rx="14" ry="8" fill="#858585" stroke="#b05050" transform="rotate(-10 14 18)" />
            <ellipse cx="16" cy="10" rx="14" ry="8.500" fill="#f6f6f6" stroke="#d83838" strokeWidth="1.500" transform="rotate(-18 16 10)" />
            <path d="M14 6l7 15M7 14l14 7" stroke="#909090" strokeWidth="1.800" />
            <ellipse cx="28" cy="22" rx="5" ry="3.500" stroke="#1880d0" strokeWidth="2" transform="rotate(-10 28 22)" />
            <ellipse cx="19" cy="29" rx="3" ry="5.500" stroke="#1880d0" strokeWidth="2" />
            <ellipse cx="26" cy="28" rx="3" ry="5" stroke="#1880d0" strokeWidth="2" transform="rotate(-40 26 28)" />
          </svg>
        </Slot>
        <Slot line="full" className="bg-[#5c585c]"><AppIcon /></Slot>
      </div>
      <div className="ml-auto flex items-center">
        <svg viewBox="0 0 18 10" className="h-[10px] w-[18px]" fill="none" stroke="#fff" strokeWidth="1.300"><path d="M.5 9.500L9 1l8.500 8.500" /></svg>
        <svg viewBox="0 0 24 18" className="mt-[2px] ml-[15px] h-[18px] w-6" fill="none" stroke="#fff" shapeRendering="crispEdges"><path d="M6 1.500h17.500v12H3.500V8M.5 1.500h6v6h-6zM3.500 3v3M3.500 13v5M12.500 14v3M8 17.500h9" /></svg>
        <svg viewBox="0 0 20 18" className="mt-[2px] ml-[13px] h-[18px] w-5" fill="none" stroke="#fff"><path d="M.5 6h3L9 .800v16.400L3.500 12h-3zM12.500 5.500l7 7M19.500 5.500l-7 7" /></svg>
        <span className="mb-[3px] ml-[15px] w-5 text-center text-[20px] font-bold leading-none">中</span>
        <svg viewBox="0 0 24 24" className="ml-[22px] h-6 w-6" fill="none">
          <path d="M1 4Q1 2 3 2L18 .500q2 0 2 2L23.500 19q0 2-2 2.500L6 24q-2 0-2.500-2z" fill="#f2551c" />
          <path d="M18 6.500c-5-2-11-1-11 2s10 2.500 10 6-6 4.500-11 2.500" stroke="#fff" strokeWidth="3.400" />
        </svg>
        <div className="ml-[24px] w-[94px] text-center font-['Open_Sans',sans-serif] text-[18.5px] leading-7 tracking-[-0.3px]">
          <div>14:30</div>
          <div>2022/9/8</div>
        </div>
        <div className="relative mt-2 ml-[30px] h-[36px] w-10">
          <svg viewBox="0 0 24 24" className="h-6 w-6"><path d="M0 0h24v19h-8l-5 5v-5H0z" fill="#fff" /><path d="M5 6h14M5 10h14M5 14h10" stroke="#222" strokeWidth="1.400" /></svg>
          <div className="absolute top-[11px] left-[7px] flex h-[25px] w-[33px] items-center justify-center rounded-full border border-[#8c8c8c] bg-[#3c3a3cee] font-['Open_Sans',sans-serif] text-[17px] font-bold leading-none">15</div>
        </div>
        <div className="ml-[14px] h-full w-[5px] border-l border-[#666]" />
      </div>
    </div>
  );
}

/* ---------- page ---------- */

export default function App() {
  return (
    <div className="relative flex h-[1080px] w-[1920px] flex-col overflow-hidden bg-linear-to-r from-[#d5d5e4] to-[#f2f2f8] font-['Noto_Sans_CJK_SC',sans-serif] text-[18px] leading-6 text-[#202024]">
      <div className="flex h-[34px] shrink-0 items-center bg-white pb-px pl-[5px] text-[#999]">
        <AppIcon />
        <span className="ml-[5px] flex-1 font-['Open_Sans',sans-serif] text-[19px] tracking-[-0.25px] [word-spacing:1.5px]">Recipe Designer - FT PharmaSuite</span>
        <svg viewBox="0 0 156 16" className="mr-[25px] h-4 w-[156px]" fill="none" stroke="#999">
          <path d="M0 8.500h15M69.500 3.500h11v12h-11zM72.500 3.500v-3h11v12h-3M140.500.500l15 15M155.500.500l-15 15" />
        </svg>
      </div>
      <div className="flex h-[62px] shrink-0 flex-col pl-[3px]">
        <div className="flex h-[33px] items-center pl-[5px] text-black">
          <Grip className="-mt-1" />
          <div className="ml-[9px] flex gap-[15px] pb-[5px]">
            {["文件", "编辑", "查看", "窗口", "帮助"].map((m) => <span key={m}>{m}</span>)}
          </div>
        </div>
        <Toolbar />
      </div>
      <div className="flex h-[653px] shrink-0">
        <LeftColumn />
        <Centre />
        <RightColumn />
      </div>
      <div className="mt-1 ml-1 flex h-[205px] shrink-0 flex-col bg-[#e6e7f0] pt-[3px] pr-px pl-[3px]">
        <PanelHeader title="步骤预览" />
      </div>
      <div className="ml-1"><TabStrip first="步骤预览" firstW="w-[80px]" rest={[["信息 (0 | 0 | 0)", "w-[159px]"], ["对比 (- | - | -)", "w-[159px]"]]} /></div>
      <div className="mt-[5px] flex h-[31px] shrink-0 items-stretch justify-end border-t-2 border-b-2 border-t-[#a0a0a8] border-b-[#b8b8c0] py-[2px] leading-[23px] text-[#14144c]">
        <div className="w-[237px] border-l border-[#a0a0a8] pl-[6px]"><T>Test.Mesqa2, --- (MESQA2)</T></div>
        <div className="w-[66px] border-l border-[#a0a0a8] pl-[5px]"><T>MESVAL</T></div>
        <div className="w-[54px] border-l border-[#a0a0a8] pl-[6px]"><T>14:30</T></div>
      </div>
      <Taskbar />
      <StatusDialog />
      <SignatureDialog />
    </div>
  );
}
